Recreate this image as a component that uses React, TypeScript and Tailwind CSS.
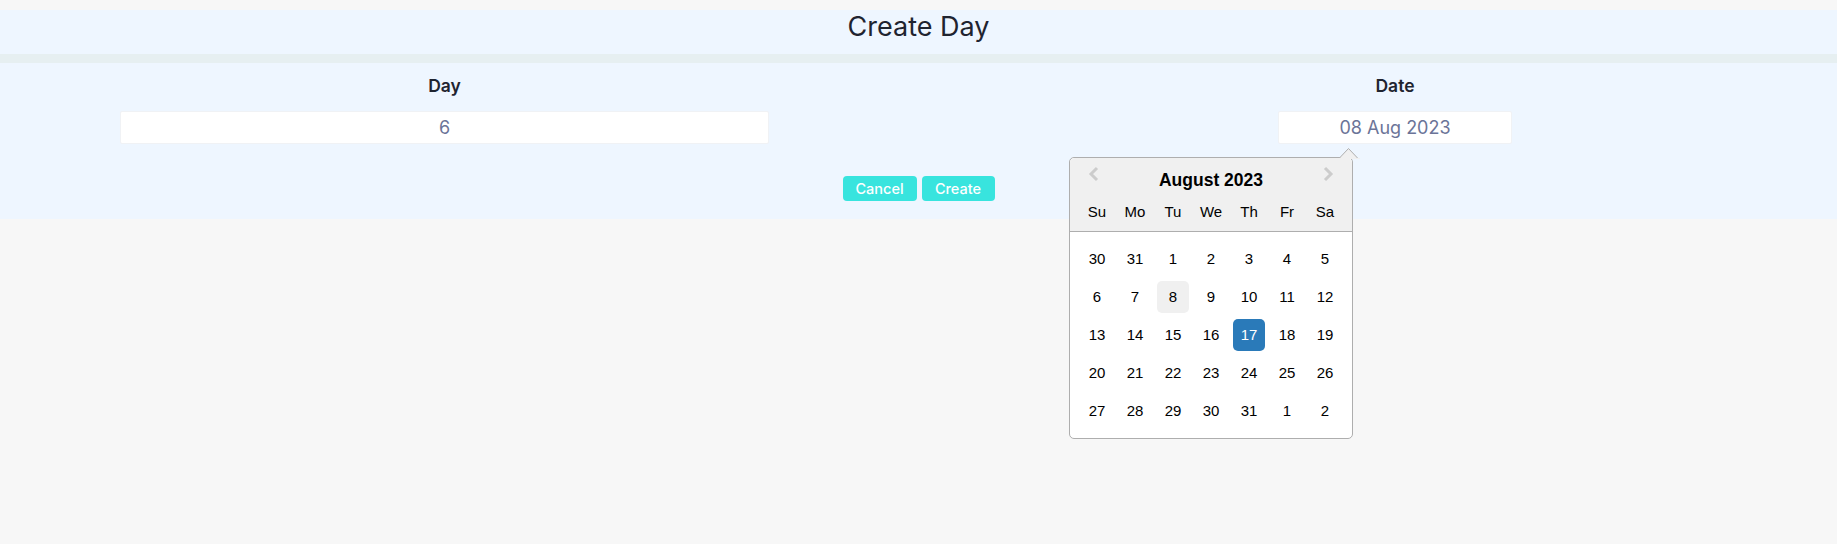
import React from 'react';

// Calendario de agosto 2023 (popover del campo fecha)
const weeks = [
  [30, 31, 1, 2, 3, 4, 5],
  [6, 7, 8, 9, 10, 11, 12],
  [13, 14, 15, 16, 17, 18, 19],
  [20, 21, 22, 23, 24, 25, 26],
  [27, 28, 29, 30, 31, 1, 2],
];
const dayNames = ['Su', 'Mo', 'Tu', 'We', 'Th', 'Fr', 'Sa'];

const Calendar = () => {
  return (
    <div className="absolute top-[46px] left-[-209px] w-[284px] rounded-[5px] border border-[#aeaeae] bg-white text-black font-['Liberation_Sans',Arial,sans-serif]">
      <svg className="absolute top-[-11px] left-[268px]" width="22" height="12" viewBox="0 0 22 12">
        <polygon points="1,11.5 10.5,1.5 20,11.5" fill="#f0f0f0" stroke="#aeaeae" strokeWidth="1" />
        <rect x="0" y="11" width="22" height="1" fill="#f0f0f0" />
      </svg>
      <div className="relative rounded-t-[5px] border-b border-[#aeaeae] bg-[#f0f0f0] pt-[12px] pb-[9px]">
        <svg className="absolute top-[8px] left-[17px]" width="14" height="16" viewBox="0 0 14 16">
          <polyline points="10,2 4,8 10,14" fill="none" stroke="#cccccc" strokeWidth="3" />
        </svg>
        <svg className="absolute top-[8px] right-[17px]" width="14" height="16" viewBox="0 0 14 16">
          <polyline points="4,2 10,8 4,14" fill="none" stroke="#cccccc" strokeWidth="3" />
        </svg>
        <div className="text-center text-[17.5px] font-bold leading-[20px]">August 2023</div>
        <div className="mt-[12px] flex justify-center">
          {dayNames.map((d) => (
            <div key={d} className="mx-[3px] w-[32px] text-center text-[15px] leading-[20px]">
              {d}
            </div>
          ))}
        </div>
      </div>
      <div className="pt-[8px] pb-[8px]">
        {weeks.map((week, w) => (
          <div key={w} className="flex justify-center">
            {week.map((n, i) => {
              let cls = 'mx-[3px] my-[3px] h-[32px] w-[32px] rounded-[5px] text-center text-[15px] leading-[31px]';
              if (w === 1 && n === 8) cls += ' bg-[#f0f0f0]';
              if (w === 2 && n === 17) cls += ' bg-[#2a7ab9] text-white';
              return (
                <div key={i} className={cls}>
                  {n}
                </div>
              );
            })}
          </div>
        ))}
      </div>
    </div>
  );
};

const App = () => {
  return (
    <div className="min-h-screen bg-[#f7f7f7] pt-[10px] font-['Inter',sans-serif] text-[#1f2430]">
      <div className="h-[44px] bg-[#eef6ff] pt-[1px] text-center text-[27px] leading-[32px]">Create Day</div>
      <div className="h-[9px] bg-[#e6eff1]"></div>
      <div className="bg-[#eef6ff] pt-[11px] pb-[18px]">
        <div className="flex pl-[120px]">
          <div className="flex w-[649px] flex-col items-center">
            <div className="text-[17.5px] font-semibold leading-[24px]">Day</div>
            <div className="mt-[13px] flex h-[33px] w-full items-center justify-center rounded-[2px] border border-[#f0f2f5] bg-white text-[18px] text-[#6b7498]">
              6
            </div>
          </div>
          <div className="ml-[509px] flex w-[234px] flex-col items-center">
            <div className="text-[17.5px] font-semibold leading-[24px]">Date</div>
            <div className="relative mt-[13px] w-full">
              <div className="flex h-[33px] w-full items-center justify-center rounded-[2px] border border-[#f0f2f5] bg-white text-[18px] text-[#6b7498]">
                08 Aug 2023
              </div>
              <Calendar />
            </div>
          </div>
        </div>
        <div className="mt-[32px] flex justify-center gap-[5px]">
          <button className="h-[25px] w-[74px] rounded-[4px] bg-[#38e4de] text-[14.5px] font-medium text-white">Cancel</button>
          <button className="h-[25px] w-[73px] rounded-[4px] bg-[#38e4de] text-[14.5px] font-medium text-white">Create</button>
        </div>
      </div>
    </div>
  );
};

export default App;
